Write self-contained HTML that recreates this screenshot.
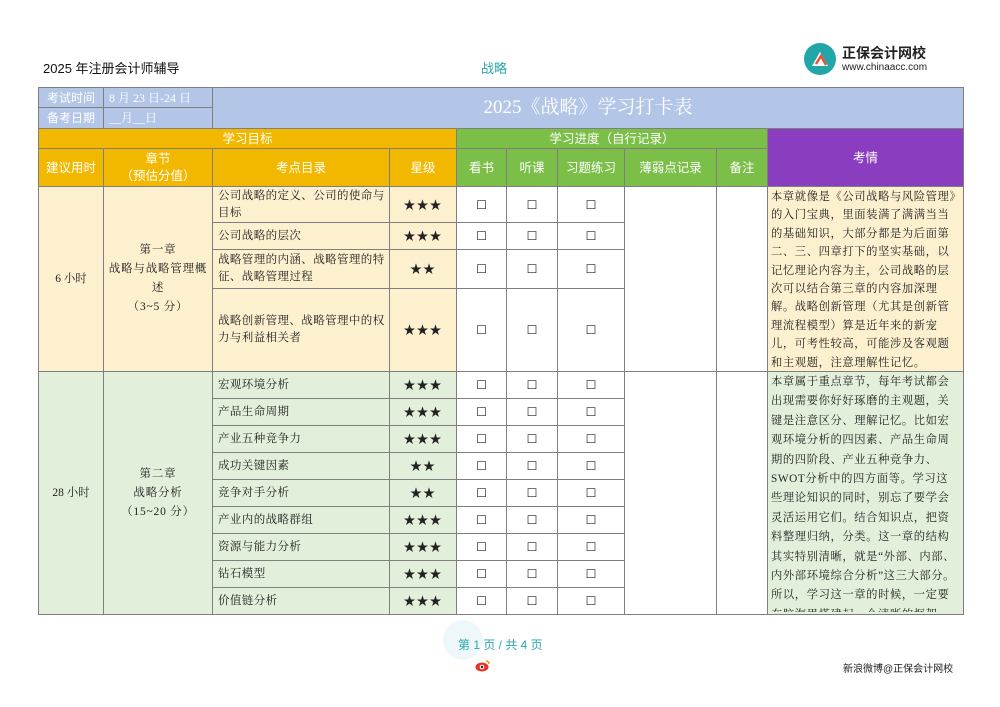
<!DOCTYPE html>
<html><head><meta charset="utf-8"><style>
body{margin:0;width:1000px;height:707px;background:#fff;position:relative;overflow:hidden;font-family:"Liberation Sans","Noto Sans CJK SC",sans-serif}
.a{position:absolute}
table{position:absolute;left:38px;top:87px;border-collapse:collapse;table-layout:fixed;font-family:"Liberation Serif","Noto Serif CJK SC",serif;font-size:11.5px;color:#222}
td{border:1px solid #7f7f7f;padding:0;text-align:center;vertical-align:middle;overflow:hidden;line-height:18px}
.b{background:#b4c6e7;color:#fff}
.o{background:#f2b800;color:#fff;font-family:"Liberation Sans","Noto Sans CJK SC",sans-serif;font-size:12.5px}
.g{background:#7bbf48;color:#fff;font-family:"Liberation Sans","Noto Sans CJK SC",sans-serif;font-size:12.5px}
.p{background:#8a3dbf;color:#fff;font-family:"Liberation Sans","Noto Sans CJK SC",sans-serif;font-size:12.5px}
.y{background:#fdf0cf}
.l{background:#e2efda}
.w{background:#fff}
.t{text-align:left;padding-left:5px;letter-spacing:0.4px;line-height:17px}
.k{text-align:left;vertical-align:top;padding:0 3px;font-size:11.3px;letter-spacing:0.6px}
.k div{overflow:hidden}
.s{font-size:12px;letter-spacing:1px}
.c{font-size:12px}
.ch{line-height:19px;letter-spacing:0.8px}
</style></head><body>
<div class="a" style="left:43px;top:58px;font-size:13px;color:#111">2025 年注册会计师辅导</div>
<div class="a" style="left:481px;top:58px;font-size:13px;color:#2aa6b0">战略</div>
<svg class="a" style="left:803px;top:42px" width="34" height="34"><circle cx="17" cy="17" r="16" fill="#22a6a8"/><path d="M9 24 L17 10 L25 24 Z" fill="#fff"/><path d="M13 22 L18 14 L23 23" fill="none" stroke="#e8523a" stroke-width="2.5"/></svg>
<div class="a" style="left:842px;top:43px;font-size:14px;font-weight:bold;color:#222">正保会计网校</div>
<div class="a" style="left:842px;top:62px;font-size:10px;color:#222">www.chinaacc.com</div>
<table>
<colgroup><col style="width:65px"><col style="width:109px"><col style="width:177px"><col style="width:67px"><col style="width:50px"><col style="width:51px"><col style="width:67px"><col style="width:92px"><col style="width:51px"><col style="width:196px"></colgroup>
<tr style="height:20px"><td class="b" style="font-family:'Liberation Sans','Noto Sans CJK SC',sans-serif;font-size:12px">考试时间</td><td class="b" style="text-align:left;padding-left:5px;font-size:12px">8 月 23 日-24 日</td><td class="b" colspan="8" rowspan="2" style="font-size:19px">2025《战略》学习打卡表</td></tr>
<tr style="height:21px"><td class="b" style="font-family:'Liberation Sans','Noto Sans CJK SC',sans-serif;font-size:12px">备考日期</td><td class="b" style="text-align:left;padding-left:5px;font-size:12px">__月__日</td></tr>
<tr style="height:20px"><td class="o" colspan="4">学习目标</td><td class="g" colspan="5">学习进度（自行记录）</td><td class="p" rowspan="2">考情</td></tr>
<tr style="height:38px"><td class="o">建议用时</td><td class="o" style="line-height:17px">章节<br>（预估分值）</td><td class="o">考点目录</td><td class="o">星级</td><td class="g">看书</td><td class="g">听课</td><td class="g">习题练习</td><td class="g">薄弱点记录</td><td class="g">备注</td></tr>
<tr style="height:36px"><td class="y" rowspan="4">6 小时</td><td class="y ch" rowspan="4">第一章<br>战略与战略管理概<br>述<br>（3~5 分）</td><td class="y t">公司战略的定义、公司的使命与目标</td><td class="y s">★★★</td><td class="w c">☐</td><td class="w c">☐</td><td class="w c">☐</td><td class="w" rowspan="4"></td><td class="w" rowspan="4"></td><td class="y k" rowspan="4"><div style="height:181px;line-height:18.4px;padding-top:1px">本章就像是《公司战略与风险管理》的入门宝典，里面装满了满满当当的基础知识，大部分都是为后面第二、三、四章打下的坚实基础，以记忆理论内容为主，公司战略的层次可以结合第三章的内容加深理解。战略创新管理（尤其是创新管理流程模型）算是近年来的新宠儿，可考性较高，可能涉及客观题和主观题，注意理解性记忆。</div></td></tr>
<tr style="height:27px"><td class="y t">公司战略的层次</td><td class="y s">★★★</td><td class="w c">☐</td><td class="w c">☐</td><td class="w c">☐</td></tr>
<tr style="height:39px"><td class="y t">战略管理的内涵、战略管理的特征、战略管理过程</td><td class="y s">★★</td><td class="w c">☐</td><td class="w c">☐</td><td class="w c">☐</td></tr>
<tr style="height:83px"><td class="y t">战略创新管理、战略管理中的权力与利益相关者</td><td class="y s">★★★</td><td class="w c">☐</td><td class="w c">☐</td><td class="w c">☐</td></tr>
<tr style="height:27px"><td class="l" rowspan="9">28 小时</td><td class="l ch" rowspan="9">第二章<br>战略分析<br>（15~20 分）</td><td class="l t">宏观环境分析</td><td class="l s">★★★</td><td class="w c">☐</td><td class="w c">☐</td><td class="w c">☐</td><td class="w" rowspan="9"></td><td class="w" rowspan="9"></td><td class="l k" rowspan="9"><div style="height:239px;line-height:19.4px;padding-top:1px">本章属于重点章节，每年考试都会出现需要你好好琢磨的主观题，关键是注意区分、理解记忆。比如宏观环境分析的四因素、产品生命周期的四阶段、产业五种竞争力、SWOT分析中的四方面等。学习这些理论知识的同时，别忘了要学会灵活运用它们。结合知识点，把资料整理归纳，分类。这一章的结构其实特别清晰，就是“外部、内部、内外部环境综合分析”这三大部分。所以，学习这一章的时候，一定要在脑海里搭建起一个清晰的框架，这</div></td></tr>
<tr style="height:27px"><td class="l t">产品生命周期</td><td class="l s">★★★</td><td class="w c">☐</td><td class="w c">☐</td><td class="w c">☐</td></tr>
<tr style="height:27px"><td class="l t">产业五种竞争力</td><td class="l s">★★★</td><td class="w c">☐</td><td class="w c">☐</td><td class="w c">☐</td></tr>
<tr style="height:27px"><td class="l t">成功关键因素</td><td class="l s">★★</td><td class="w c">☐</td><td class="w c">☐</td><td class="w c">☐</td></tr>
<tr style="height:27px"><td class="l t">竞争对手分析</td><td class="l s">★★</td><td class="w c">☐</td><td class="w c">☐</td><td class="w c">☐</td></tr>
<tr style="height:27px"><td class="l t">产业内的战略群组</td><td class="l s">★★★</td><td class="w c">☐</td><td class="w c">☐</td><td class="w c">☐</td></tr>
<tr style="height:27px"><td class="l t">资源与能力分析</td><td class="l s">★★★</td><td class="w c">☐</td><td class="w c">☐</td><td class="w c">☐</td></tr>
<tr style="height:27px"><td class="l t">钻石模型</td><td class="l s">★★★</td><td class="w c">☐</td><td class="w c">☐</td><td class="w c">☐</td></tr>
<tr style="height:27px"><td class="l t">价值链分析</td><td class="l s">★★★</td><td class="w c">☐</td><td class="w c">☐</td><td class="w c">☐</td></tr>
</table>
<div class="a" style="left:443px;top:620px;width:40px;height:40px;border-radius:50%;background:#eef8fa"></div>
<div class="a" style="left:458px;top:636px;font-size:12px;color:#2aa6b0">第 1 页 / 共 4 页</div>
<svg class="a" style="left:475px;top:658px" width="16" height="14"><ellipse cx="7" cy="9" rx="6.5" ry="4.5" fill="#e6332a"/><circle cx="7" cy="9" r="2.3" fill="#fff"/><circle cx="7" cy="9" r="1.2" fill="#222"/><path d="M11 3 Q14 3 14 6" stroke="#f39800" stroke-width="1.5" fill="none"/></svg>
<div class="a" style="left:843px;top:660px;font-size:10px;color:#222">新浪微博@正保会计网校</div>
</body></html>
